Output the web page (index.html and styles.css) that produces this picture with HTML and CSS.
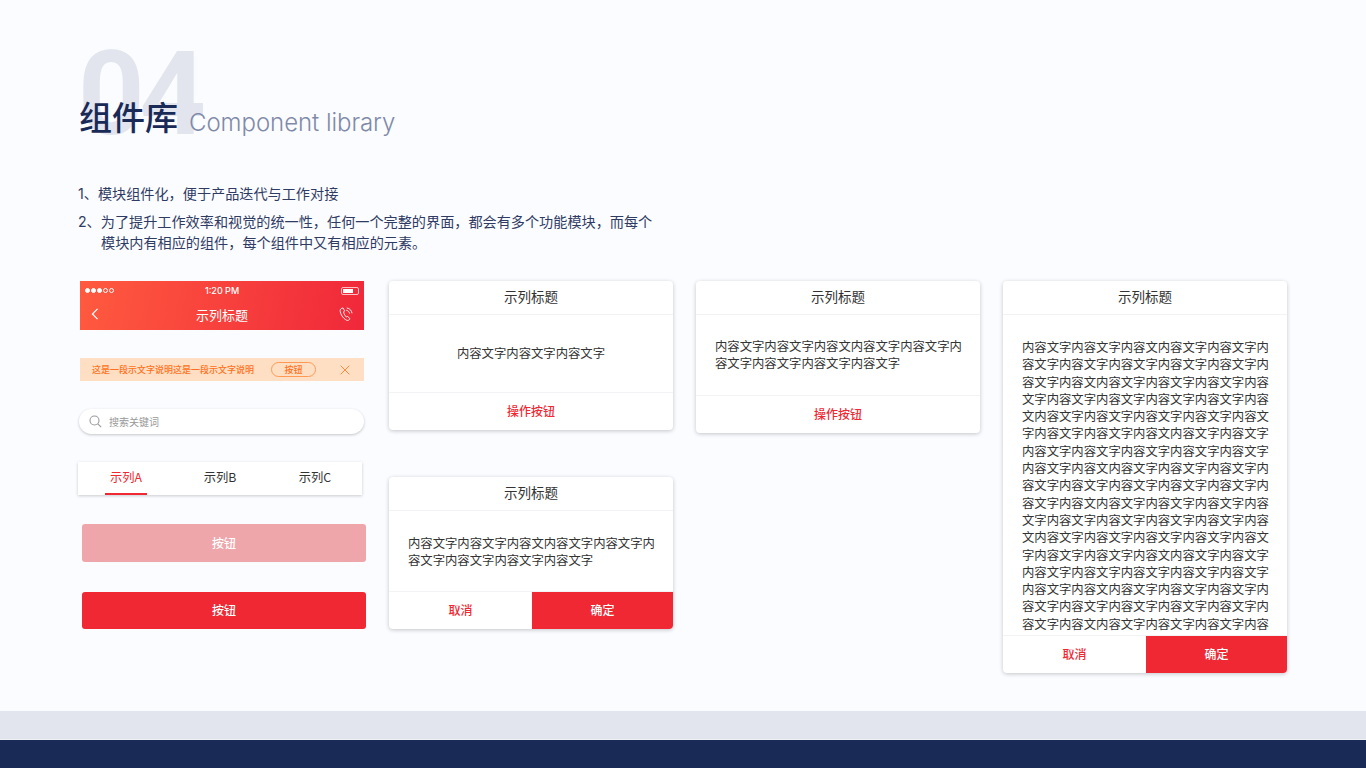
FILE: index.html
```html
<!DOCTYPE html>
<html lang="zh-CN">
<head>
    <meta charset="UTF-8">
    <title>组件库 Component library</title>
    <link rel="stylesheet" href="styles.css">
</head>
<body>
    <div class="slide">
        <header class="intro">
            <span class="big-num">04</span>
            <h1 class="title"><span class="title-cn">组件库</span><span class="title-en">Component library</span></h1>
            <ol class="points">
                <li><span class="point-no">1、</span>模块组件化&#xFF0C;便于产品迭代与工作对接</li>
                <li><span class="point-no">2、</span>为了提升工作效率和视觉的统一性&#xFF0C;任何一个完整的界面&#xFF0C;都会有多个功能模块&#xFF0C;而每个<br><span class="point-indent">模块内有相应的组件&#xFF0C;每个组件中又有相应的元素。</span></li>
            </ol>
        </header>

        <main class="board">
            <!-- 第一列:基础组件 -->
            <section class="col col-basic">
                <div class="phone-head">
                    <div class="status-bar">
                        <span class="signal"><i class="on"></i><i class="on"></i><i class="on"></i><i></i><i></i></span>
                        <span class="clock">1:20 PM</span>
                        <span class="battery"><i></i></span>
                    </div>
                    <div class="nav-bar">
                        <svg class="back" width="8" height="12" viewBox="0 0 8 12"><path d="M6.5 .8 1.4 6l5.1 5.2" fill="none" stroke="#fff" stroke-width="1.2"/></svg>
                        <span class="nav-title">示列标题</span>
                        <svg class="call" width="14" height="15" viewBox="0 0 14 15" fill="none" stroke="#fff" stroke-width=".9"><path d="M2.2 1.6 4 .9l1.6 3-1 1.1c.3 1.700 1.400 3.700 2.800 5l1.300-.7 2.300 2.500-1.300 1.300c-.8.600-1.800.4-2.900-.3C3.700 10.900 1.700 7.500 1.200 4.300 1 3.100 1.400 2.200 2.200 1.600Z"/><path d="M7.300 3.300c1.700.2 3 1.500 3.300 3.300M7.800 1c2.800.3 4.800 2.400 5.200 5.300"/></svg>
                    </div>
                </div>
                <div class="notice">
                    <span class="notice-text">这是一段示文字说明这是一段示文字说明</span>
                    <span class="notice-btn">按钮</span>
                    <svg class="notice-close" width="10" height="10" viewBox="0 0 10 10"><path d="M.7.700l8.600 8.600M9.300.700.7 9.300" stroke="#ff8a3c" stroke-width="1"/></svg>
                </div>
                <div class="search">
                    <svg width="13" height="13" viewBox="0 0 13 13" fill="none" stroke="#9a9a9a" stroke-width="1.100"><circle cx="5.500" cy="5.500" r="4.500"/><path d="m8.800 8.800 3.400 3.400"/></svg>
                    <span>搜索关键词</span>
                </div>
                <div class="tabs">
                    <span class="tab tab-on">示列A</span>
                    <span class="tab">示列B</span>
                    <span class="tab">示列C</span>
                </div>
                <button class="btn btn-off">按钮</button>
                <button class="btn btn-on">按钮</button>
            </section>

            <!-- 第二列 -->
            <section class="col col-dialogs">
                <div class="card">
                    <div class="card-title">示列标题</div>
                    <div class="card-body body-single">内容文字内容文字内容文字</div>
                    <div class="card-action">操作按钮</div>
                </div>
                <div class="card">
                    <div class="card-title">示列标题</div>
                    <div class="card-body body-double">内容文字内容文字内容文内容文字内容文字内容文字内容文字内容文字内容文字</div>
                    <div class="card-actions"><span class="act-cancel">取消</span><span class="act-ok">确定</span></div>
                </div>
            </section>

            <!-- 第三列 -->
            <section class="col">
                <div class="card">
                    <div class="card-title">示列标题</div>
                    <div class="card-body body-double body-mid">内容文字内容文字内容文内容文字内容文字内容文字内容文字内容文字内容文字</div>
                    <div class="card-action">操作按钮</div>
                </div>
            </section>

            <!-- 第四列:长内容 -->
            <section class="col">
                <div class="card">
                    <div class="card-title">示列标题</div>
                    <div class="card-body body-long">
                        内容文字内容文字内容文内容文字内容文字内<br>
                        容文字内容文字内容文字内容文字内容文字内<br>
                        容文字内容文内容文字内容文字内容文字内容<br>
                        文字内容文字内容文字内容文字内容文字内容<br>
                        文内容文字内容文字内容文字内容文字内容文<br>
                        字内容文字内容文字内容文内容文字内容文字<br>
                        内容文字内容文字内容文字内容文字内容文字<br>
                        内容文字内容文内容文字内容文字内容文字内<br>
                        容文字内容文字内容文字内容文字内容文字内<br>
                        容文字内容文内容文字内容文字内容文字内容<br>
                        文字内容文字内容文字内容文字内容文字内容<br>
                        文内容文字内容文字内容文字内容文字内容文<br>
                        字内容文字内容文字内容文内容文字内容文字<br>
                        内容文字内容文字内容文字内容文字内容文字<br>
                        内容文字内容文内容文字内容文字内容文字内<br>
                        容文字内容文字内容文字内容文字内容文字内<br>
                        容文字内容文内容文字内容文字内容文字内容
                    </div>
                    <div class="card-actions"><span class="act-cancel">取消</span><span class="act-ok">确定</span></div>
                </div>
            </section>
        </main>

        <footer class="foot">
            <div class="foot-band"></div>
            <div class="foot-dark"></div>
        </footer>
    </div>
</body>
</html>
```
FILE: styles.css
```css
:root {
    --fundo: #fbfcff;
    --azul: #1a2a57;
    --cinza-claro: #e2e5ee;
    --vermelho: #f02833;
    --texto: #333;
    --cjk: "Noto Sans CJK SC", sans-serif;
}

* {
    box-sizing: border-box;
}

body {
    margin: 0;
    background-color: var(--fundo);
    font-family: var(--cjk);
    overflow: hidden;
}

.slide {
    height: 768px;
    display: flex;
    flex-direction: column;
    overflow: hidden;
}

/* cabeçalho */
.intro {
    position: relative;
    height: 281px;
    padding: 94px 0 0 78px;
    flex-shrink: 0;
}

.big-num {
    position: absolute;
    left: 78px;
    top: 25px;
    font-family: Roboto, sans-serif;
    font-weight: 700;
    font-size: 116px;
    line-height: 1.2;
    letter-spacing: -5px;
    color: var(--cinza-claro);
}

.title {
    position: relative;
    margin: 0;
    display: flex;
    align-items: flex-start;
    font-weight: 500;
}

.title-cn {
    margin-left: 1px;
    font-size: 33px;
    line-height: 44px;
    color: var(--azul);
}

.title-en {
    margin: 7px 0 0 11px;
    font-family: Inter, sans-serif;
    font-weight: 300;
    font-size: 24px;
    line-height: 44px;
    letter-spacing: -.05px;
    color: #7f8aa8;
}

.points {
    list-style: none;
    margin: 38px 0 0;
    padding: 0;
    font-size: 14.150px;
    line-height: 21px;
    color: #2f3b63;
}

.points li {
    margin-bottom: 7px;
}

.point-no {
    font-family: Inter, var(--cjk);
    line-height: 1;
}

.point-indent {
    margin-left: 23px;
}

/* grade de componentes */
.board {
    height: 430px;
    padding-left: 78px;
    display: grid;
    grid-template-columns: 288px 284px 284px 284px;
    column-gap: 23px;
    align-items: start;
    flex-shrink: 0;
}

.col {
    display: flex;
    flex-direction: column;
}

.col-dialogs {
    gap: 47px;
}

/* cabeçalho do celular */
.phone-head {
    width: 284px;
    height: 49px;
    margin-left: 2px;
    background: linear-gradient(100deg, #ff5a3f 0%, #f0283a 100%);
    color: #fff;
}

.status-bar {
    height: 19px;
    padding: 0 5px;
    display: grid;
    grid-template-columns: 1fr auto 1fr;
    align-items: center;
}

.signal {
    display: flex;
    gap: 1px;
}

.signal i {
    width: 5px;
    height: 5px;
    border: .7px solid #fff;
    border-radius: 50%;
}

.signal .on {
    background-color: #fff;
}

.clock {
    font-family: Inter, sans-serif;
    font-size: 9px;
    font-weight: 500;
}

.battery {
    justify-self: end;
    width: 18px;
    height: 8px;
    padding: 1px;
    border: .7px solid rgba(255, 255, 255, .7);
    border-radius: 2px;
}

.battery i {
    display: block;
    width: 10px;
    height: 100%;
    background-color: #fff;
}

.nav-bar {
    height: 28px;
    padding: 0 11px;
    display: grid;
    grid-template-columns: 1fr auto 1fr;
    align-items: center;
}

.nav-title {
    font-size: 13px;
}

.call {
    justify-self: end;
}

/* aviso */
.notice {
    width: 284px;
    height: 23px;
    margin: 28px 0 0 2px;
    padding-left: 12px;
    display: flex;
    align-items: center;
    background-color: #ffdfc3;
    color: #ff7020;
    font-weight: 500;
}

.notice-text {
    width: 179px;
    font-size: 9px;
    white-space: nowrap;
}

.notice-btn {
    width: 45px;
    height: 15px;
    border: 1px solid #ff9a55;
    border-radius: 8px;
    font-size: 9px;
    line-height: 13px;
    text-align: center;
}

.notice-close {
    margin-left: 24px;
}

/* busca */
.search {
    width: 285px;
    height: 25px;
    margin: 28px 0 0 1px;
    padding-left: 10px;
    display: flex;
    align-items: center;
    gap: 7px;
    background-color: #fff;
    border-radius: 13px;
    box-shadow: 0 1px 3px rgba(0, 0, 0, .22);
    font-size: 10px;
    color: #999;
}

/* abas */
.tabs {
    width: 284px;
    height: 33px;
    margin-top: 28px;
    display: grid;
    grid-template-columns: 94px 94px 96px;
    background-color: #fff;
    box-shadow: 0 1px 3px rgba(0, 0, 0, .2);
    font-size: 12.300px;
    color: var(--texto);
}

.tab {
    padding: 7px 0 0 2px;
    text-align: center;
    line-height: 17px;
}

.tab-on {
    width: 42px;
    margin-left: 27px;
    padding-left: 0;
    border-bottom: 2px solid var(--vermelho);
    color: var(--vermelho);
    white-space: nowrap;
}

/* botões */
.btn {
    width: 284px;
    margin-left: 4px;
    border: 0;
    border-radius: 3px;
    padding: 0 0 2px;
    font-family: var(--cjk);
    font-size: 12px;
    font-weight: 500;
    color: #fff;
}

.btn-off {
    height: 38px;
    margin-top: 29px;
    background-color: #eea6ab;
}

.btn-on {
    height: 37px;
    margin-top: 30px;
    background-color: var(--vermelho);
}

/* cards */
.card {
    width: 284px;
    background-color: #fff;
    border-radius: 4px;
    box-shadow: 0 1px 4px rgba(0, 0, 0, .22);
    overflow: hidden;
}

.card-title {
    height: 34px;
    border-bottom: 1px solid #f3f3f5;
    text-align: center;
    font-size: 13.500px;
    line-height: 31px;
    color: var(--texto);
}

.card-body {
    font-size: 12.350px;
    line-height: 17.300px;
    color: var(--texto);
}

.body-single {
    height: 77px;
    padding-top: 30px;
    text-align: center;
}

.body-double {
    height: 80px;
    padding: 24px 18px 0 19px;
}

.body-mid {
    padding-top: 23px;
}

.body-long {
    height: 320px;
    padding: 24px 10px 0 19px;
    overflow: hidden;
    white-space: nowrap;
}

.card-action {
    height: 38px;
    border-top: 1px solid #f3f3f5;
    text-align: center;
    font-size: 12px;
    font-weight: 500;
    line-height: 36px;
    color: var(--vermelho);
}

.card-actions {
    height: 38px;
    display: grid;
    grid-template-columns: 143px 141px;
    border-top: 1px solid #f3f3f5;
    text-align: center;
    font-size: 12px;
    font-weight: 500;
    line-height: 36px;
}

.act-cancel {
    color: var(--vermelho);
}

.act-ok {
    background-color: var(--vermelho);
    color: #fff;
}

/* rodapé */
.foot {
    flex: 1;
    display: flex;
    flex-direction: column;
}

.foot-band {
    height: 28px;
    background-color: var(--cinza-claro);
}

.foot-dark {
    flex: 1;
    border-top: 1px solid #eef0f5;
    background-color: var(--azul);
}
```
